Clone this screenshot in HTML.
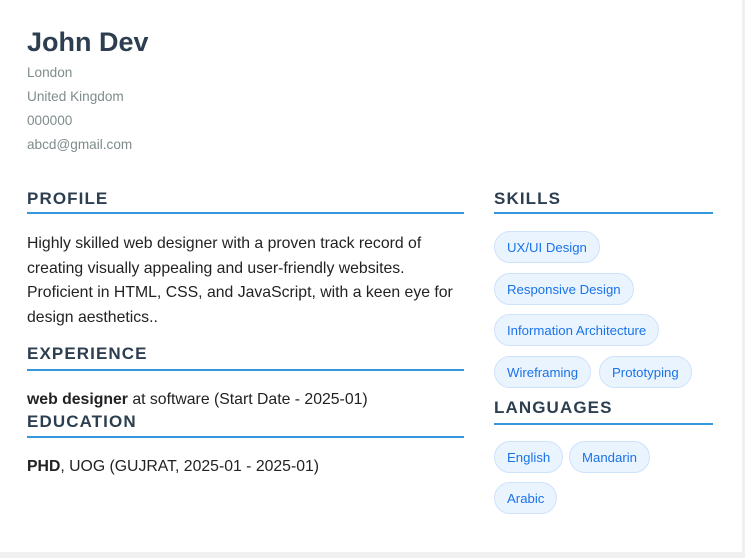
<!DOCTYPE html>
<html><head><meta charset="utf-8"><style>
body{margin:0;background:#f0f0f0;font-family:"Liberation Sans","DejaVu Sans",sans-serif;}
.card{position:absolute;left:0;top:0;width:742px;height:552px;background:#fff;}
.abs{position:absolute;white-space:nowrap;}
h1{position:absolute;left:27px;top:25px;margin:0;font-size:27px;font-weight:bold;color:#2c3e50;line-height:34px;}
.c{left:27px;font-size:13.6px;color:#7f8c8d;line-height:16px;}
.h{font-size:17px;font-weight:bold;color:#2c3e50;letter-spacing:1.1px;line-height:20px;}
.line{position:absolute;height:2px;background:#3498db;}
.t{font-size:15.8px;color:#222;line-height:24.5px;left:27px;}
.tag{position:absolute;height:32px;box-sizing:border-box;border:1px solid #cfe2fb;background:#eaf4ff;border-radius:16px;color:#1a73e8;font-size:13.2px;line-height:32px;padding:0 12px;white-space:nowrap;}
</style></head><body><div class="card">
<h1>John Dev</h1>
<div class="abs c" style="top:65px">London</div>
<div class="abs c" style="top:89px">United Kingdom</div>
<div class="abs c" style="top:113px">000000</div>
<div class="abs c" style="top:137px">abcd@gmail.com</div>

<div class="abs h" style="left:27px;top:189px">PROFILE</div>
<div class="line" style="left:27px;top:212px;width:437px"></div>
<div class="abs t" style="top:232px">Highly skilled web designer with a proven track record of<br>creating visually appealing and user-friendly websites.<br>Proficient in HTML, CSS, and JavaScript, with a keen eye for<br>design aesthetics..</div>
<div class="abs h" style="left:27px;top:344px">EXPERIENCE</div>
<div class="line" style="left:27px;top:369px;width:437px"></div>
<div class="abs t" style="top:388px"><b>web designer</b> at software (Start Date - 2025-01)</div>
<div class="abs h" style="left:27px;top:412px">EDUCATION</div>
<div class="line" style="left:27px;top:436px;width:437px"></div>
<div class="abs t" style="top:455px"><b>PHD</b>, UOG (GUJRAT, 2025-01 - 2025-01)</div>

<div class="abs h" style="left:494px;top:189px">SKILLS</div>
<div class="line" style="left:494px;top:212px;width:219px"></div>
<div class="tag" style="left:494px;top:231px">UX/UI Design</div>
<div class="tag" style="left:494px;top:273px">Responsive Design</div>
<div class="tag" style="left:494px;top:314px">Information Architecture</div>
<div class="tag" style="left:494px;top:356px">Wireframing</div>
<div class="tag" style="left:599px;top:356px">Prototyping</div>
<div class="abs h" style="left:494px;top:398px">LANGUAGES</div>
<div class="line" style="left:494px;top:423px;width:219px"></div>
<div class="tag" style="left:494px;top:441px">English</div>
<div class="tag" style="left:569px;top:441px">Mandarin</div>
<div class="tag" style="left:494px;top:482px">Arabic</div>
</div></body></html>
